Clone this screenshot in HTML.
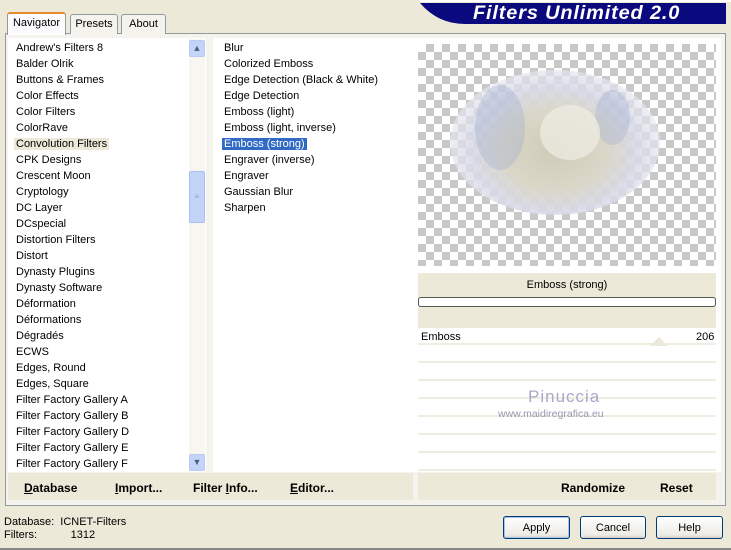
<!DOCTYPE html>
<html><head><style>
*{margin:0;padding:0;box-sizing:border-box}
body{width:731px;height:550px;background:#ECE9D8;font-family:"Liberation Sans",sans-serif;font-size:11px;color:#000;position:relative;overflow:hidden}
.a{position:absolute}
.tab{position:absolute;top:14px;height:20px;border:1px solid #919B9C;border-bottom:none;background:#F4F3EE;border-radius:3px 3px 0 0;text-align:center;line-height:19px;font-size:11px}
.list div{height:16px;line-height:17px;padding-left:8px;white-space:nowrap}
.list2 div{height:16px;line-height:17px;padding-left:11px;white-space:nowrap}
.sel span{background:#316AC5;color:#fff;padding:0 2px;margin-left:-2px}
.btn{position:absolute;font-weight:bold;font-size:12px}
.pb{position:absolute;top:516px;height:23px;border:1px solid #003C74;border-radius:3px;background:linear-gradient(#fff,#ECEBE6 85%,#D6D0C5);text-align:center;line-height:22px;font-size:11px}
.row{position:absolute;left:418px;width:298px;height:16px;background:#fff;border-bottom:2px solid #EFEDE1}
</style></head><body>
<svg class="a" style="left:420px;top:0" width="311" height="26"><path d="M0 3 Q18 24 45 24 L306 24 L306 3 Z" fill="#0A0A7E"/><path d="M0 1 L311 1" stroke="#fff" stroke-width="2"/></svg>
<div class="a" style="left:473px;top:3px;color:#fff;font-weight:bold;font-style:italic;font-size:19px;letter-spacing:0.8px;transform:scaleX(1.05);transform-origin:left">Filters Unlimited 2.0</div>
<div class="a" style="left:5px;top:33px;width:721px;height:473px;border:1px solid #919B9C;background:#F4F3EE"></div>
<div class="tab" style="left:7px;top:12px;width:59px;height:23px;background:#FCFCFE;border-top:2px solid #E68B2C;z-index:2">Navigator</div>
<div class="tab" style="left:70px;width:48px">Presets</div>
<div class="tab" style="left:121px;width:45px">About</div>
<div class="a" style="left:8px;top:38px;width:198px;height:434px;background:#fff"></div>
<div class="a list" style="left:8px;top:40px;width:180px">
<div>Andrew's Filters 8</div><div>Balder Olrik</div><div>Buttons &amp; Frames</div><div>Color Effects</div><div>Color Filters</div><div>ColorRave</div><div><span style="background:#ECE9D8;padding:0 2px;margin-left:-2px">Convolution Filters</span></div><div>CPK Designs</div><div>Crescent Moon</div><div>Cryptology</div><div>DC Layer</div><div>DCspecial</div><div>Distortion Filters</div><div>Distort</div><div>Dynasty Plugins</div><div>Dynasty Software</div><div>Déformation</div><div>Déformations</div><div>Dégradés</div><div>ECWS</div><div>Edges, Round</div><div>Edges, Square</div><div>Filter Factory Gallery A</div><div>Filter Factory Gallery B</div><div>Filter Factory Gallery D</div><div>Filter Factory Gallery E</div><div>Filter Factory Gallery F</div>
</div>
<div class="a" style="left:189px;top:39px;width:16px;height:432px;background:#F7F6F0"></div>
<div class="a" style="left:189px;top:40px;width:16px;height:17px;border:1px solid #B9CBF3;border-radius:2px;background:#C4D4F8;color:#4D6185;font-size:9px;text-align:center;line-height:15px">▲</div>
<div class="a" style="left:189px;top:171px;width:16px;height:52px;border:1px solid #A8BEF3;border-radius:2px;background:#C4D4F8;color:#8AA4DA;font-size:8px;text-align:center;line-height:50px">≡</div>
<div class="a" style="left:189px;top:454px;width:16px;height:17px;border:1px solid #B9CBF3;border-radius:2px;background:#C4D4F8;color:#4D6185;font-size:9px;text-align:center;line-height:15px">▼</div>
<div class="a" style="left:213px;top:38px;width:200px;height:434px;background:#fff"></div>
<div class="a list2" style="left:213px;top:40px;width:199px">
<div>Blur</div><div>Colorized Emboss</div><div>Edge Detection (Black &amp; White)</div><div>Edge Detection</div><div>Emboss (light)</div><div>Emboss (light, inverse)</div><div class="sel"><span>Emboss (strong)</span></div><div>Engraver (inverse)</div><div>Engraver</div><div>Gaussian Blur</div><div>Sharpen</div>
</div>
<div class="a" style="left:413px;top:38px;width:308px;height:434px;background:#fff"></div>
<div class="a" style="left:418px;top:44px;width:298px;height:222px;background-color:#fff;background-image:linear-gradient(45deg,#C8C8C8 25%,transparent 25%,transparent 75%,#C8C8C8 75%),linear-gradient(45deg,#C8C8C8 25%,transparent 25%,transparent 75%,#C8C8C8 75%);background-size:16px 16px;background-position:0 0,8px 8px"></div>
<div class="a" style="left:450px;top:70px;width:210px;height:145px;border-radius:50%;background:radial-gradient(ellipse at 50% 55%,#CFCBB8 0%,#DAD7C8 35%,rgba(215,217,230,0.9) 55%,rgba(235,236,242,0.6) 75%,rgba(255,255,255,0) 100%)"></div>
<div class="a" style="left:475px;top:85px;width:50px;height:85px;border-radius:50%;background:rgba(150,165,205,0.3)"></div>
<div class="a" style="left:595px;top:90px;width:35px;height:55px;border-radius:50%;background:rgba(150,165,205,0.3)"></div>
<div class="a" style="left:540px;top:105px;width:60px;height:55px;border-radius:50%;background:rgba(240,238,228,0.7)"></div>
<div class="a" style="left:418px;top:273px;width:298px;height:55px;background:#ECE9D8"></div>
<div class="a" style="left:418px;top:279px;width:298px;text-align:center">Emboss (strong)</div>
<div class="a" style="left:418px;top:297px;width:298px;height:10px;border:1px solid #555;border-radius:3px;background:#fff"></div>
<div class="row" style="top:329px"></div>
<div class="a" style="left:421px;top:331px">Emboss</div>
<div class="a" style="left:696px;top:331px">206</div>
<svg class="a" style="left:650px;top:337px" width="18" height="9"><path d="M0 9 L9 0 L18 9Z" fill="#ECE9D8"/></svg>
<div class="row" style="top:347px"></div><div class="row" style="top:365px"></div><div class="row" style="top:383px"></div><div class="row" style="top:401px"></div><div class="row" style="top:419px"></div><div class="row" style="top:437px"></div><div class="row" style="top:455px"></div>
<div class="a" style="left:528px;top:387px;color:#A8A8C8;font-size:17px;letter-spacing:1px">Pinuccia</div>
<div class="a" style="left:498px;top:408px;color:#9898B0;font-size:10.5px">www.maidiregrafica.eu</div>
<div class="a" style="left:8px;top:473px;width:405px;height:27px;background:#ECE9D8"></div>
<div class="a" style="left:418px;top:473px;width:298px;height:27px;background:#ECE9D8"></div>
<div class="btn" style="left:24px;top:481px"><u>D</u>atabase</div>
<div class="btn" style="left:115px;top:481px"><u>I</u>mport...</div>
<div class="btn" style="left:193px;top:481px">Filter <u>I</u>nfo...</div>
<div class="btn" style="left:290px;top:481px"><u>E</u>ditor...</div>
<div class="btn" style="left:561px;top:481px">Randomize</div>
<div class="btn" style="left:660px;top:481px">Reset</div>
<div class="a" style="left:4px;top:516px;line-height:13px">Database:&nbsp; ICNET-Filters<br>Filters:&nbsp;&nbsp;&nbsp;&nbsp;&nbsp;&nbsp;&nbsp;&nbsp;&nbsp;&nbsp; 1312</div>
<div class="pb" style="left:503px;width:67px;box-shadow:inset 0 0 0 1px #A9C1EC">Apply</div>
<div class="pb" style="left:580px;width:66px">Cancel</div>
<div class="pb" style="left:656px;width:67px">Help</div>
<div class="a" style="left:0;top:548px;width:731px;height:2px;background:#888"></div>
</body></html>
